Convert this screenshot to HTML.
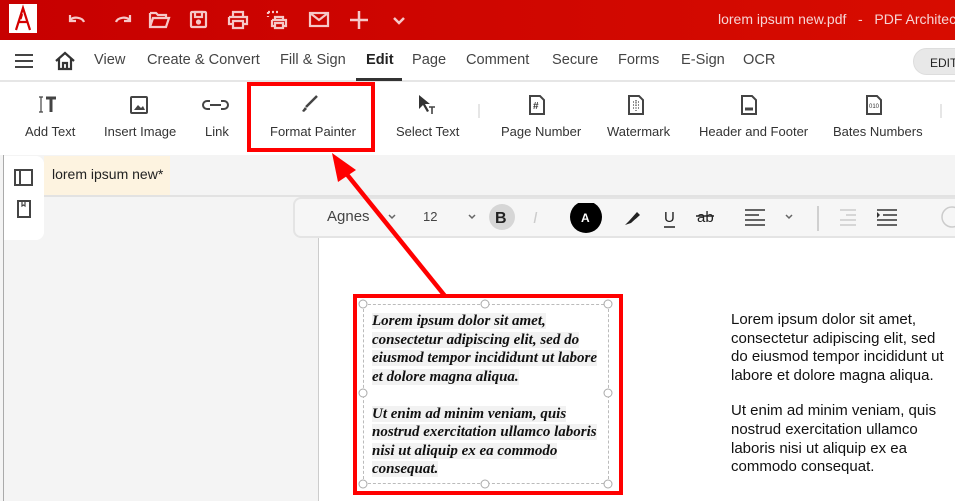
<!DOCTYPE html>
<html><head><meta charset="utf-8"><style>
*{margin:0;padding:0;box-sizing:border-box}
body{width:955px;height:501px;overflow:hidden;position:relative;background:#f4f4f4;font-family:"Liberation Sans",Arial,sans-serif;color:#333}
.a{position:absolute}
.title{left:0;top:0;width:955px;height:40px;background:linear-gradient(90deg,#c70000,#d70c00)}
.logo{left:9px;top:4px;width:28px;height:29px;background:#fff}
.menu{left:0;top:40px;width:955px;height:42px;background:#fff;border-bottom:2px solid #e6e6e6}
.mi{top:52px;font-size:14.6px;color:#444}
.rib{left:0;top:82px;width:955px;height:73px;background:#fff}
.lbl{top:124px;font-size:13px;color:#333}
svg{position:absolute}
.sc{font-family:"Liberation Serif",serif;font-style:italic;font-weight:bold;font-size:15px;line-height:18.5px;color:#111}
.sc span{background:#f2f2f2}
.rt{font-size:15px;line-height:18.6px;color:#111;white-space:nowrap}
</style></head><body>
<div class="a title"></div>
<div class="a logo"></div>
<svg style="left:9px;top:4px" width="28" height="29"><path d="M7 26 L14 4 L21 26 M9.5 18 H18.5 M13 10 L11.5 15" stroke="#d40000" stroke-width="2.2" fill="none"/></svg>
<svg style="left:60px;top:8px" width="360" height="24" fill="none" stroke="#f6c8c8" stroke-width="2.2">
<path d="M10 12 a8 6 0 0 1 14 2 M10 7 v6 h6"/>
<path d="M70 12 a8 6 0 0 0 -14 2 M70 7 v6 h-6"/>
<path d="M90 5 h6 l2 2 h8 v3 M90 5 v14 h16 l3 -9 h-16 l-3 9"/>
<rect x="131" y="4" width="15" height="15" rx="1"/><rect x="135" y="4" width="7" height="5"/><circle cx="138.5" cy="14" r="1.5" fill="#f6c8c8"/>
<path d="M173 9 v-5 h10 v5 M169 9 h18 v7 h-4 M173 16 h-4 v-7 M173 13 h10 v7 h-10z"/>
<path d="M208 4 h12 M208 4 v5" stroke-dasharray="2 2"/><path d="M212 12 h14 v6 h-3 M215 18 h-3 v-6 M215 15 h8 v5 h-8z M215 12 v-3 h8 v3"/>
<rect x="250" y="5" width="18" height="13"/><path d="M250 5 l9 7 l9 -7"/>
<path d="M299 3 v18 M290 12 h18" stroke-width="2.5"/>
<path d="M334 10 l5 5 l5 -5" stroke-width="2.5"/>
</svg>
<div class="a" style="right:0;top:11px;font-size:14px;color:#f6d4d4;white-space:nowrap;left:718px">lorem ipsum new.pdf&nbsp;&nbsp;&nbsp;-&nbsp;&nbsp;&nbsp;PDF Architect</div>
<div class="a" style="left:3px;top:40px;width:1px;height:461px;background:#aaa"></div>
<div class="a menu"></div>
<svg style="left:14px;top:53px" width="20" height="16"><path d="M1 2h18M1 8h18M1 14h18" stroke="#444" stroke-width="2"/></svg>
<svg style="left:54px;top:51px" width="22" height="20" fill="none" stroke="#333" stroke-width="2.2"><path d="M2 10 L11 2 L20 10 M5 8 V18 H17 V8 M9 18 V12 H13 V18"/></svg>
<div class="a mi" style="left:94px">View</div>
<div class="a mi" style="left:147px">Create &amp; Convert</div>
<div class="a mi" style="left:280px">Fill &amp; Sign</div>
<div class="a mi" style="left:366px;color:#222;font-weight:bold">Edit</div>
<div class="a" style="left:356px;top:78px;width:46px;height:3px;background:#333"></div>
<div class="a mi" style="left:412px">Page</div>
<div class="a mi" style="left:466px">Comment</div>
<div class="a mi" style="left:552px">Secure</div>
<div class="a mi" style="left:618px">Forms</div>
<div class="a mi" style="left:681px">E-Sign</div>
<div class="a mi" style="left:743px">OCR</div>
<div class="a" style="left:913px;top:48px;width:60px;height:27px;border-radius:14px;background:#e8e8e8;border:1px solid #ddd;font-size:12px;padding:7px 0 0 16px;color:#222">EDIT</div>
<div class="a rib"></div>
<svg style="left:0;top:94px" width="955" height="24" fill="none" stroke="#444" stroke-width="2">
<path d="M41 3v15M39 3h4M39 18h4" stroke-width="1.2"/><path d="M46 4h10M51 4v14" stroke-width="3"/>
<rect x="131" y="3" width="16" height="16" rx="1"/><path d="M134 16l4-5 3 3 2-2 2 4z" fill="#444" stroke="none"/>
<path d="M210 7h-3a4 4 0 0 0 0 8h3M221 7h3a4 4 0 0 1 0 8h-3M210 11h11"/>
<path d="M302 17l3-4 2 2-3 3z" fill="#444" stroke="none"/><path d="M306 13l11-11" stroke-width="2.5"/>
<path d="M419 1v14l4-4 4 7 2-1-4-7h5z" fill="#333" stroke="none"/><path d="M429 13h6M432 13v7" stroke-width="1.6"/>
<path d="M530 2h10l4 4v14h-14z"/><text x="533" y="15" font-size="10" font-weight="bold" fill="#333" stroke="none">#</text>
<path d="M629 2h10l4 4v14h-14z"/><path d="M633 8h6M633 11h6M633 14h6M636 6v11" stroke-dasharray="1 1.5" stroke-width="1.2"/>
<path d="M742 2h10l4 4v14h-14z"/><path d="M745 15h8" stroke-width="3"/>
<path d="M867 2h10l4 4v14h-14z"/><text x="869" y="14" font-size="6" fill="#333" stroke="none">010</text>
<path d="M479 10v18M941 10v18" stroke="#ccc" stroke-width="1"/>
</svg>
<div class="a lbl" style="left:25px">Add Text</div>
<div class="a lbl" style="left:104px">Insert Image</div>
<div class="a lbl" style="left:205px">Link</div>
<div class="a lbl" style="left:270px">Format Painter</div>
<div class="a lbl" style="left:396px">Select Text</div>
<div class="a lbl" style="left:501px">Page Number</div>
<div class="a lbl" style="left:607px">Watermark</div>
<div class="a lbl" style="left:699px">Header and Footer</div>
<div class="a lbl" style="left:833px">Bates Numbers</div>
<div class="a" style="left:247px;top:82px;width:128px;height:70px;border:4px solid #f00"></div>
<div class="a" style="left:44px;top:195px;width:911px;height:2px;background:#e2e2e2"></div>
<div class="a" style="left:44px;top:156px;width:126px;height:39px;background:#fdf3e0;font-size:14px;padding:10px 0 0 8px;color:#222">lorem ipsum new*</div>
<div class="a" style="left:4px;top:156px;width:40px;height:84px;background:#fff;border-radius:0 8px 8px 0"></div>
<svg style="left:14px;top:168px" width="20" height="60" fill="none" stroke="#444" stroke-width="2"><rect x="1" y="2" width="17" height="15"/><path d="M6 2v15"/><rect x="4" y="33" width="12" height="16"/><path d="M8 33v5l1.5-1 1.5 1v-5" stroke-width="1.2"/></svg>
<div class="a" style="left:293px;top:197px;width:680px;height:41px;background:#f6f6f6;border:2px solid #e4e4e4;border-radius:8px"></div>
<div class="a" style="left:318px;top:238px;width:637px;height:263px;background:#fff;border-left:1px solid #ccc"></div>
<div class="a" style="left:327px;top:208px;font-size:15px;color:#444">Agnes</div>
<div class="a" style="left:423px;top:209px;font-size:13px;color:#444">12</div>
<svg style="left:380px;top:203px" width="575" height="30" fill="none" stroke="#666" stroke-width="1.5">
<path d="M9 12l3 3 3-3M89 12l3 3 3-3M406 12l3 3 3-3"/>
<circle cx="122" cy="14" r="13" fill="#d6d6d6" stroke="none"/><text x="115" y="20" font-size="16" font-weight="bold" fill="#222" stroke="none" font-family="Liberation Sans">B</text>
<text x="153" y="20" font-size="16" font-style="italic" fill="#ccc" stroke="none">I</text>
<circle cx="206" cy="14" r="16" fill="#000" stroke="none"/><text x="201" y="19" font-size="12" font-weight="bold" fill="#fff" stroke="none">A</text>
<path d="M245 22l4-4 8-9 3 3-9 8z" fill="#222" stroke="none"/>
<text x="284" y="19" font-size="15" fill="#222" stroke="none">U</text><path d="M284 24h11" stroke="#222"/>
<text x="317" y="19" font-size="15" fill="#222" stroke="none">ab</text><path d="M316 13h18" stroke="#222"/>
<path d="M365 7h20M365 12h14M365 17h20M365 22h20" stroke="#333"/>
<path d="M438 3v25M603 3v25" stroke="#aaa" stroke-width="1"/>
<path d="M460 7h16M466 12h10M460 17h16M460 22h16" stroke="#ccc"/>
<path d="M497 7h20M503 12h14M497 17h20M497 22h20" stroke="#333"/><path d="M497 9l3 3-3 3z" fill="#333" stroke="none"/>
<circle cx="572" cy="14" r="10" stroke="#ccc"/>
</svg>
<div class="a" style="left:353px;top:294px;width:270px;height:201px;border:4px solid #f00"></div>
<div class="a" style="left:363px;top:304px;width:246px;height:180px;border:1px dashed #bbb"></div>
<svg style="left:355px;top:296px" width="265" height="196" fill="#fff" stroke="#aaa"><circle cx="8" cy="8" r="4"/><circle cx="130" cy="8" r="4"/><circle cx="253" cy="8" r="4"/><circle cx="8" cy="97" r="4"/><circle cx="253" cy="97" r="4"/><circle cx="8" cy="188" r="4"/><circle cx="130" cy="188" r="4"/><circle cx="253" cy="188" r="4"/></svg>
<div class="a sc" style="left:372px;top:312px;width:236px"><span>Lorem ipsum dolor sit amet, consectetur adipiscing elit, sed do eiusmod tempor incididunt ut labore et dolore magna aliqua.</span><br><br><span>Ut enim ad minim veniam, quis nostrud exercitation ullamco laboris nisi ut aliquip ex ea commodo consequat.</span></div>
<div class="a rt" style="left:731px;top:311px">Lorem ipsum dolor sit amet,<br>consectetur adipiscing elit, sed<br>do eiusmod tempor incididunt ut<br>labore et dolore magna aliqua.<div style="height:17px"></div>Ut enim ad minim veniam, quis<br>nostrud exercitation ullamco<br>laboris nisi ut aliquip ex ea<br>commodo consequat.</div>
<svg style="left:0;top:0" width="955" height="501"><path d="M445 296 L345 172" stroke="#f00" stroke-width="4.5"/><path d="M332 153 L356 170 L338 182 z" fill="#f00"/></svg>
</body></html>
